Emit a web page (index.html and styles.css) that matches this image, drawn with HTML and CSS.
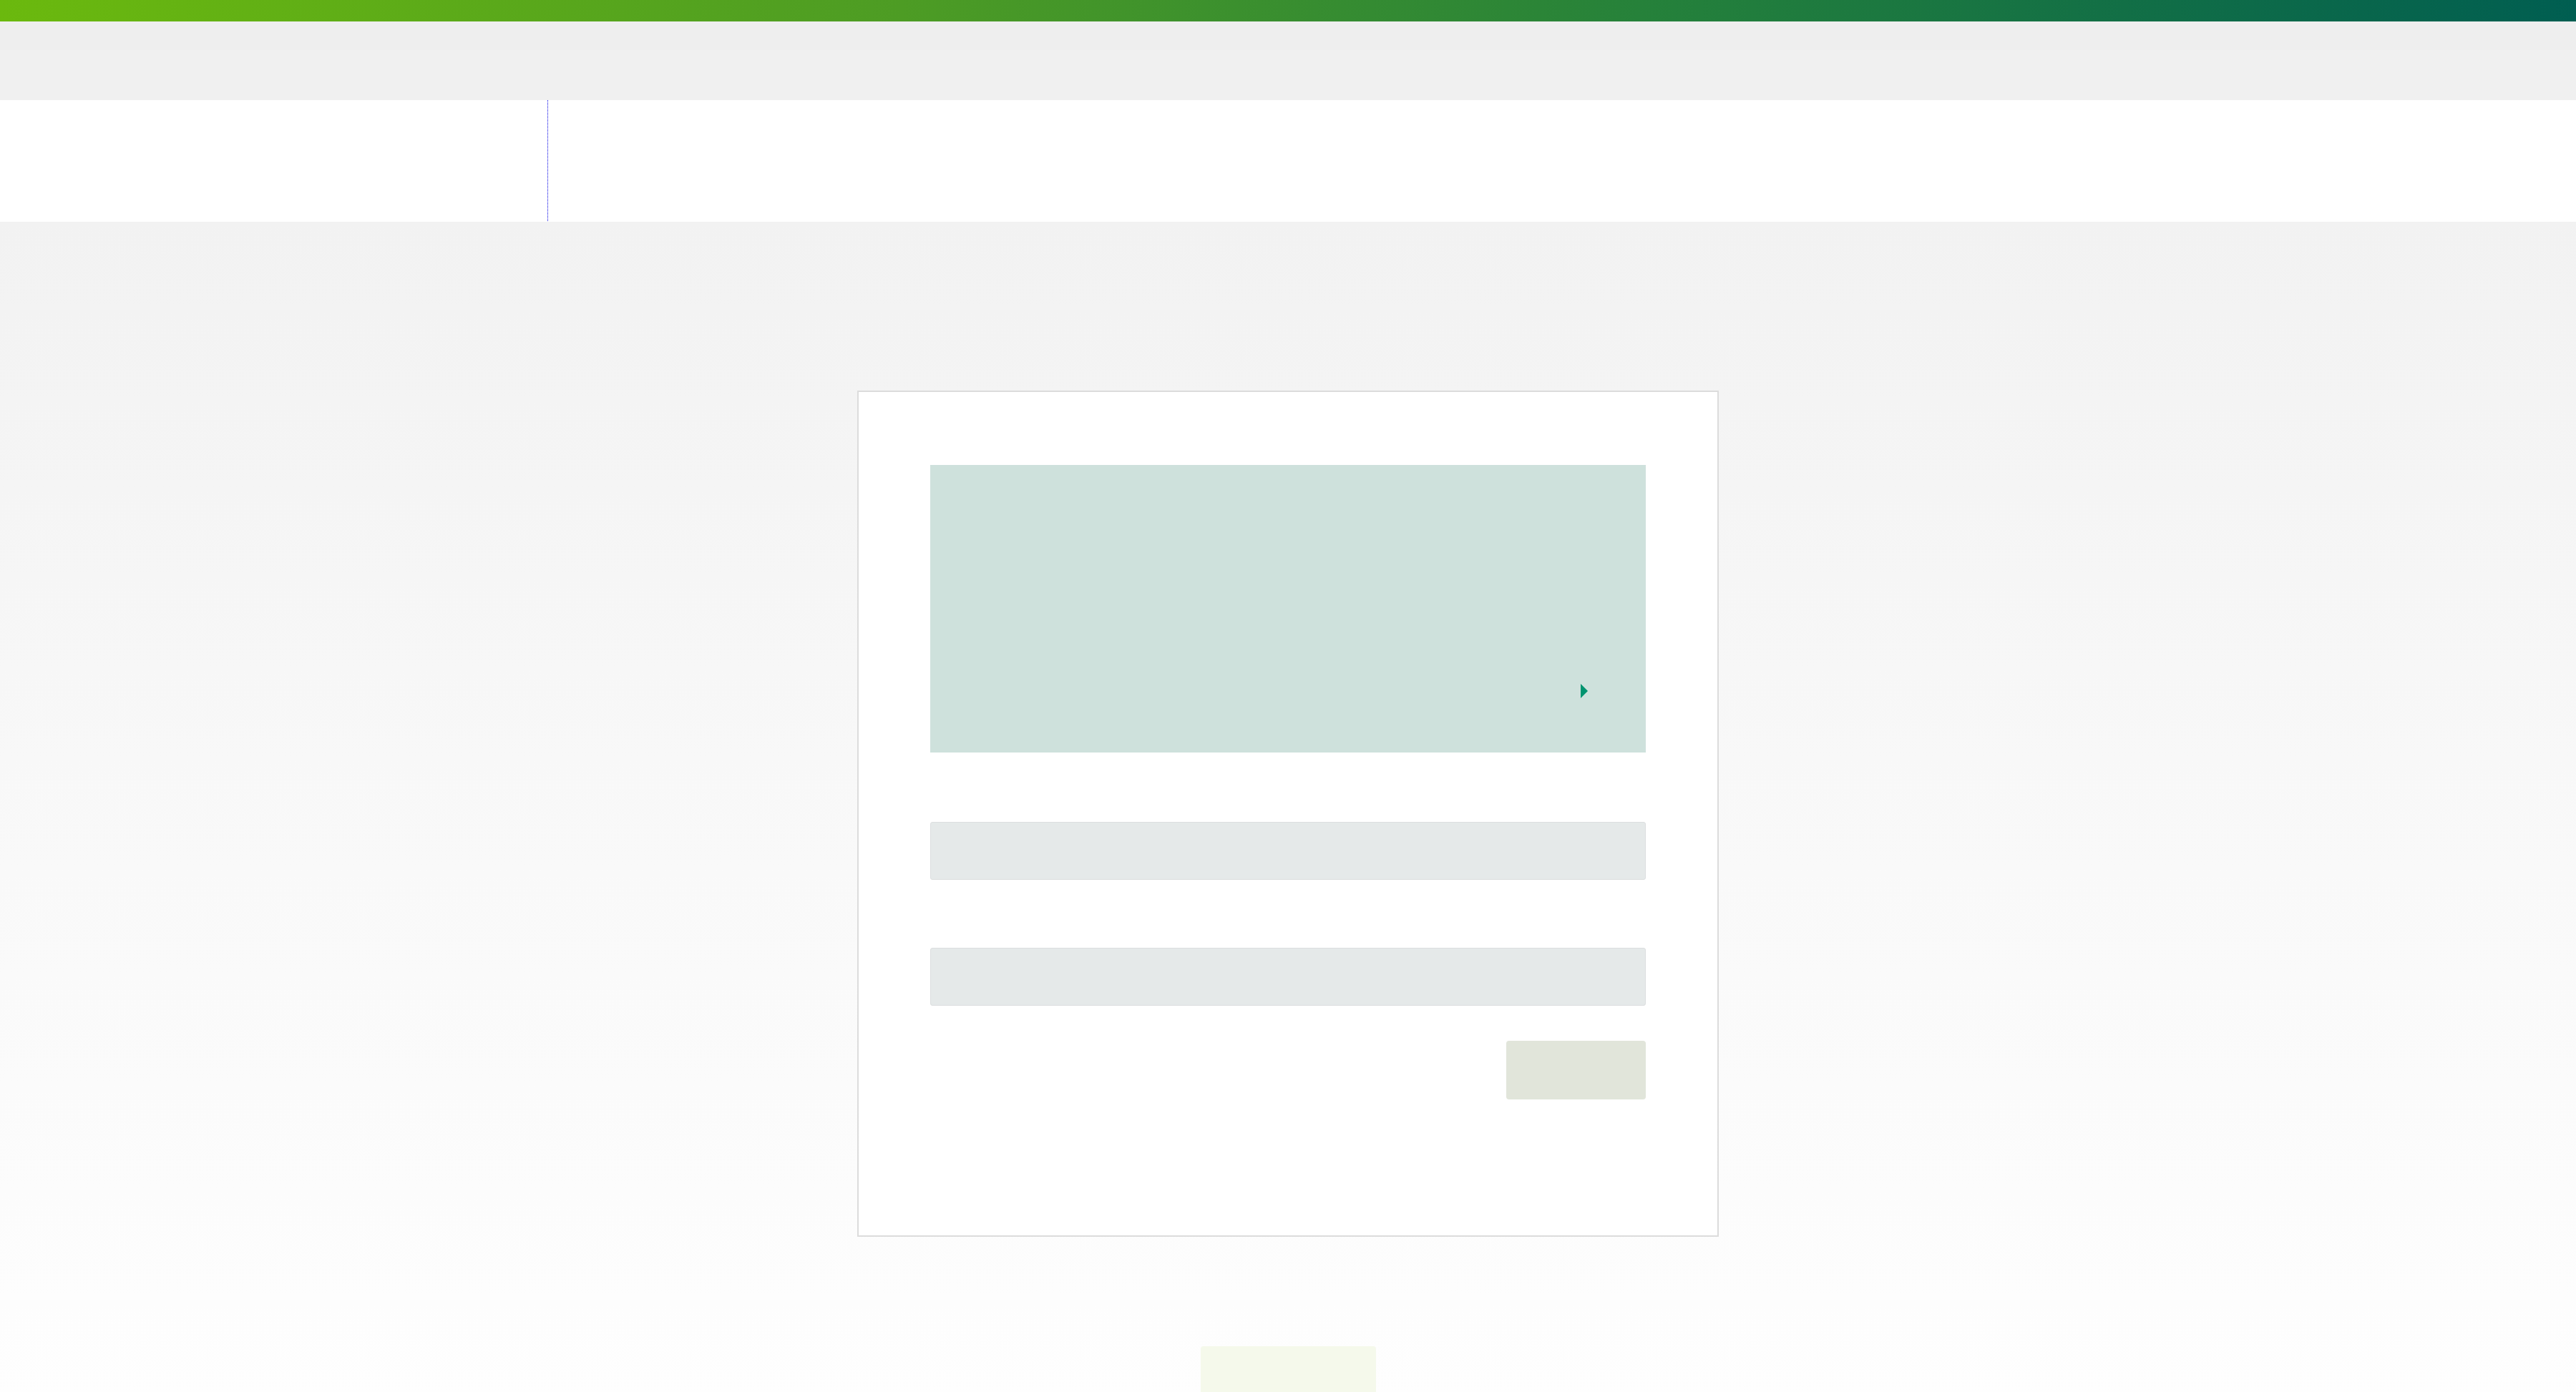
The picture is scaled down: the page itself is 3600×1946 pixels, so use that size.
FILE: index.html
```html
<!DOCTYPE html>
<html lang="en">
<head>
<meta charset="utf-8">
<title>Login</title>
<link rel="stylesheet" href="styles.css">
</head>
<body>
  <div class="brand-bar"></div>
  <div class="utility-bar">
    <div class="utility-top"></div>
    <div class="utility-bottom"></div>
  </div>
  <header class="site-header">
    <div class="header-logo"></div>
    <div class="header-rest"></div>
  </header>
  <main class="main">
    <section class="card">
      <div class="notice">
        <div class="notice-link">
          <svg class="notice-arrow" width="10" height="20" viewBox="0 0 10 20" aria-hidden="true">
            <polygon points="0,0 10,10 0,20" fill="#00936f"/>
          </svg>
        </div>
      </div>
      <div class="field field-first"></div>
      <div class="field field-second"></div>
      <div class="actions">
        <div class="btn"></div>
      </div>
    </section>
    <div class="footer-box"></div>
  </main>
</body>
</html>
```

FILE: styles.css
```css
html, body {
  margin: 0;
  padding: 0;
  overflow: hidden;
  height: 1946px;
}
body {
  font-family: "Liberation Sans", Arial, sans-serif;
  background: #ffffff;
  display: flex;
  flex-direction: column;
}
.brand-bar {
  height: 30px;
  flex: none;
  background: linear-gradient(to right, #6bb90e 0%, #4d9c24 35%, #24803b 65%, #005e51 100%);
}
.utility-bar {
  flex: none;
  display: flex;
  flex-direction: column;
}
.utility-top {
  height: 40px;
  background: #eeeeee;
}
.utility-bottom {
  height: 70px;
  background: #f0f0f0;
}
.site-header {
  flex: none;
  height: 170px;
  background: #ffffff;
  display: flex;
}
.header-logo {
  width: 765px;
  height: 169px;
  border-right: 1px dotted #0000e6;
}
.header-rest {
  flex: 1;
}
.main {
  flex: 1;
  display: flex;
  flex-direction: column;
  align-items: center;
  background: linear-gradient(to bottom, #f2f2f2 0%, #f8f8f8 45%, #fefefe 100%);
  padding-top: 236px;
}
.card {
  width: 1000px;
  background: #ffffff;
  border: 2px solid #dcdcdc;
  padding: 102px 100px 190px;
  display: flex;
  flex-direction: column;
}
.notice {
  height: 402px;
  background: #cee1dc;
  display: flex;
  flex-direction: column;
  justify-content: flex-end;
}
.notice-link {
  display: flex;
  justify-content: flex-end;
  padding: 0 81px 76px 0;
}
.notice-arrow {
  display: block;
}
.field {
  height: 79px;
  background: #e5e9e9;
  border: 1px solid #dcdedf;
  border-radius: 3px;
}
.field-first {
  margin-top: 97px;
}
.field-second {
  margin-top: 95px;
}
.actions {
  display: flex;
  justify-content: flex-end;
  margin-top: 49px;
}
.btn {
  width: 195px;
  height: 82px;
  background: #e1e5da;
  border-radius: 4px;
}
.footer-box {
  width: 245px;
  height: 90px;
  margin-top: 153px;
  background: #f5f9eb;
  border-radius: 4px 4px 0 0;
}
```
